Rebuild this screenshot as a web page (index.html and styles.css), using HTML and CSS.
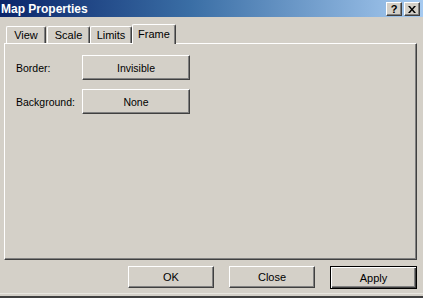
FILE: index.html
```html
<!DOCTYPE html>
<html lang="en">
<head>
    <meta charset="UTF-8">
    <meta name="viewport" content="width=device-width, initial-scale=1.0">
    <title>Map Properties</title>
    <link rel="stylesheet" href="styles.css">
</head>
<body>

    <div class="window">
        <div class="titlebar">
            <span class="title">Map Properties</span>
            <div class="caption-buttons">
                <span class="cap-btn">?</span>
                <span class="cap-btn close-x">
                    <svg width="8" height="7" viewBox="0 0 8 7">
                        <path d="M0 0h2l2 2.5L6 0h2L5 3.5 8 7H6L4 4.5 2 7H0l3-3.5z" fill="#000"/>
                    </svg>
                </span>
            </div>
        </div>

        <div class="tabs">
            <div class="tab tab-view">View</div>
            <div class="tab tab-scale">Scale</div>
            <div class="tab tab-limits">Limits</div>
            <div class="tab tab-frame active">Frame</div>
        </div>

        <div class="panel">
            <div class="row">
                <label class="row-label">Border:</label>
                <button class="btn field-btn">Invisible</button>
            </div>
            <div class="row">
                <label class="row-label">Background:</label>
                <button class="btn field-btn">None</button>
            </div>
        </div>

        <div class="actions">
            <button class="btn action-btn">OK</button>
            <button class="btn action-btn">Close</button>
            <button class="btn action-btn default">Apply</button>
        </div>

        <div class="bottom-edge"></div>
    </div>

</body>
</html>
```

FILE: styles.css
```css
body {
    margin: 0;
    background-color: #d4d0c8;
    font-family: "Liberation Sans", Arial, sans-serif;
    font-size: 10.5px;
    color: #000;
}

.window {
    width: 423px;
    height: 298px;
    display: flex;
    flex-direction: column;
    overflow: hidden;
}

.titlebar {
    height: 17px;
    display: flex;
    align-items: center;
    justify-content: space-between;
    background: linear-gradient(to right, #0a246a 0%, #3a6ea5 45%, #a6caf0 100%);
}

.title {
    color: #fff;
    font-weight: bold;
    font-size: 12px;
    padding-left: 1px;
}

.caption-buttons {
    display: flex;
    gap: 2px;
    margin-right: 3px;
    margin-top: 1px;
}

.cap-btn {
    width: 14px;
    height: 12px;
    display: flex;
    align-items: center;
    justify-content: center;
    font-weight: bold;
    font-size: 11px;
    background-color: #d4d0c8;
    border: 1px solid;
    border-color: #fff #404040 #404040 #fff;
    box-shadow: inset -1px -1px #808080;
}

.tabs {
    height: 20px;
    margin-top: 6px;
    padding-left: 6px;
    display: flex;
    align-items: flex-end;
}

.tab {
    height: 17px;
    box-sizing: border-box;
    border: 1px solid;
    border-bottom: none;
    border-color: #fff #404040 #fff #fff;
    border-radius: 2px 2px 0 0;
    box-shadow: inset -1px 0 #808080;
    display: flex;
    align-items: center;
    justify-content: center;
    font-size: 11px;
}

.tab-view { width: 40px; margin-right: 1px; }
.tab-scale { width: 43px; }
.tab-limits { width: 42px; }
.tab-frame { width: 44px; }

.tab.active {
    height: 20px;
    margin-bottom: -1px;
    position: relative;
    z-index: 1;
    background-color: #d4d0c8;
    padding-bottom: 2px;
}

.panel {
    margin-left: 4px;
    width: 413px;
    height: 217px;
    box-sizing: border-box;
    border: 1px solid;
    border-color: #fff #404040 #404040 #fff;
    box-shadow: inset -1px -1px #808080;
    padding: 11px 0 0 11px;
    display: flex;
    flex-direction: column;
    gap: 9px;
}

.row {
    display: flex;
    align-items: center;
}

.row-label {
    width: 66px;
    font-size: 10.5px;
}

.btn {
    font-family: "Liberation Sans", Arial, sans-serif;
    font-size: 10.5px;
    color: #000;
    background-color: #d4d0c8;
    border: 1px solid;
    border-color: #fff #404040 #404040 #fff;
    box-shadow: inset -1px -1px #808080;
    padding: 0;
    margin: 0;
    box-sizing: border-box;
}

.field-btn {
    width: 108px;
    height: 25px;
}

.actions {
    display: flex;
    justify-content: flex-end;
    gap: 15px;
    margin-top: 6px;
    padding-right: 6px;
}

.action-btn {
    width: 86px;
    height: 22px;
    font-size: 11px;
}

.action-btn.default {
    width: 87px;
    height: 23px;
    border: 1px solid #000;
    box-shadow: inset 1px 1px #fff, inset -1px -1px #404040, inset -2px -2px #808080;
}

.bottom-edge {
    margin-top: auto;
    height: 5px;
    border-top: 1px solid #e8e6e0;
    border-bottom: 2px solid #404040;
    box-sizing: border-box;
}
```
